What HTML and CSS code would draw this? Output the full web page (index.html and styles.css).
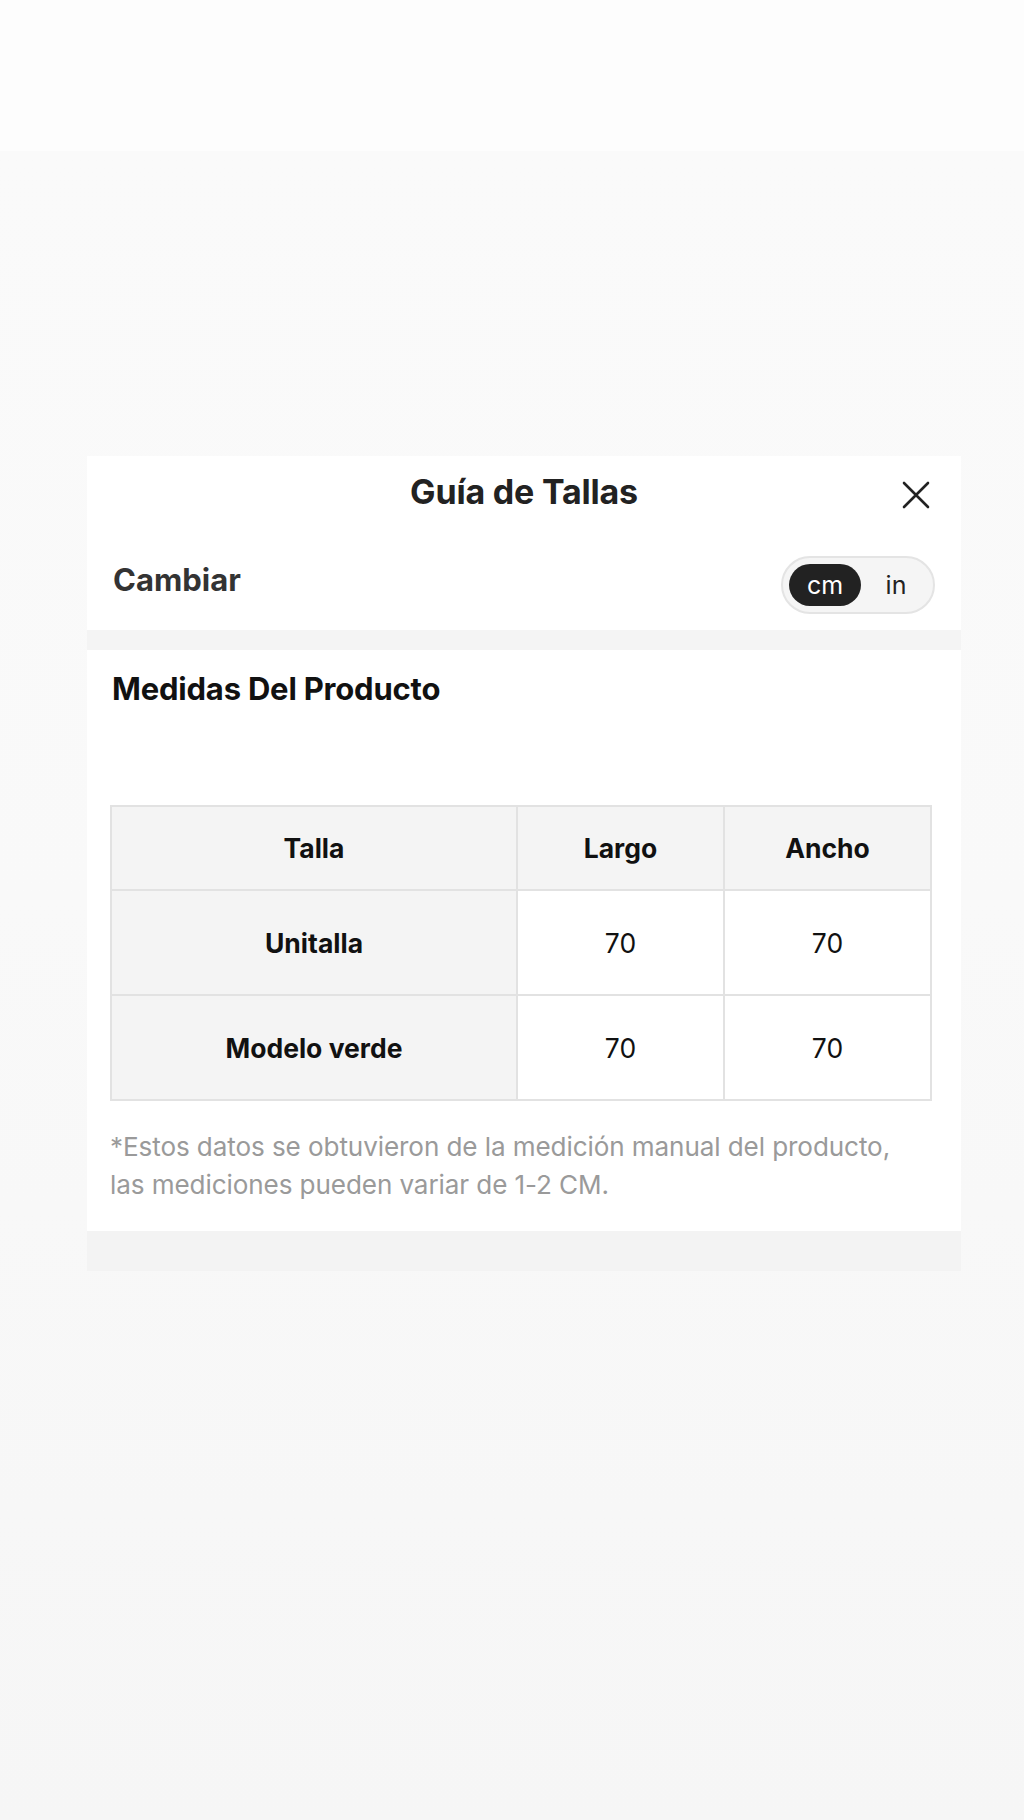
FILE: index.html
```html
<!DOCTYPE html>
<html lang="es">
<head>
<meta charset="utf-8">
<link rel="stylesheet" href="styles.css">
</head>
<body>
<div class="page">
  <div class="topband"></div>
  <div class="modal">
    <div class="head">
      <div class="title-row">
        <h1 class="title">Guía de Tallas</h1>
        <svg class="close" viewBox="0 0 30 30" width="30" height="30"><path d="M3 3 L27 27 M27 3 L3 27" stroke="#222" stroke-width="2.6" stroke-linecap="round" fill="none"/></svg>
      </div>
      <div class="unit-row">
        <span class="unit-label">Cambiar</span>
        <div class="toggle">
          <span class="opt on">cm</span>
          <span class="opt">in</span>
        </div>
      </div>
    </div>
    <div class="sep"></div>
    <div class="body">
      <h2 class="section-title">Medidas Del Producto</h2>
      <table class="sizes">
        <colgroup>
          <col class="w1">
          <col class="w2">
          <col class="w2">
        </colgroup>
        <thead>
          <tr><th class="c1">Talla</th><th>Largo</th><th>Ancho</th></tr>
        </thead>
        <tbody>
          <tr><th class="c1">Unitalla</th><td>70</td><td>70</td></tr>
          <tr><th class="c1">Modelo verde</th><td>70</td><td>70</td></tr>
        </tbody>
      </table>
      <p class="note">*Estos datos se obtuvieron de la medición manual del producto, las mediciones pueden variar de 1-2 CM.</p>
    </div>
    <div class="foot"></div>
  </div>
</div>
</body>
</html>
```

FILE: styles.css
```css
html, body {
  margin: 0;
  padding: 0;
}
body {
  width: 1024px;
  min-height: 1820px;
  background: linear-gradient(#fafafa 151px, #f9f9f9 900px, #f6f6f6 1820px);
  font-family: Inter, "Noto Sans", "Liberation Sans", sans-serif;
  color: #111;
}
.page {
  display: flex;
  flex-direction: column;
}
.topband {
  height: 151px;
  background: #fdfdfd;
}
.modal {
  margin: 305px 0 0 87px;
  width: 874px;
  display: flex;
  flex-direction: column;
}
.head {
  background: #fff;
  height: 174px;
  display: flex;
  flex-direction: column;
  padding: 0 26px;
  box-sizing: border-box;
}
.title-row {
  height: 70px;
  display: flex;
  align-items: center;
  justify-content: center;
  position: relative;
}
.title {
  margin: 0;
  font-size: 34px;
  font-weight: 700;
  color: #222;
  letter-spacing: -0.2px;
}
.close {
  position: absolute;
  right: 4px;
  top: 24px;
}
.unit-row {
  display: flex;
  align-items: center;
  justify-content: space-between;
  margin-top: 30px;
}
.unit-label {
  font-size: 31px;
  font-weight: 700;
  color: #333;
  margin-bottom: 12px;
}
.toggle {
  display: flex;
  align-items: center;
  gap: 4px;
  width: 154px;
  height: 58px;
  box-sizing: border-box;
  border: 2px solid #e4e4e4;
  border-radius: 29px;
  background: #f5f5f5;
  padding: 0 6px;
}
.opt {
  font-size: 25px;
  color: #222;
  width: 62px;
  height: 42px;
  display: flex;
  align-items: center;
  justify-content: center;
  border-radius: 21px;
}
.opt.on {
  width: 72px;
  background: #222;
  color: #fff;
}
.sep {
  height: 20px;
  background: #f4f4f4;
}
.body {
  background: #fff;
  padding: 20px 31px 0 23px;
  height: 581px;
  box-sizing: border-box;
}
.section-title {
  margin: 0 0 0 2px;
  font-size: 31px;
  font-weight: 700;
  color: #111;
  letter-spacing: -0.2px;
}
.sizes {
  margin-top: 98px;
  width: 820px;
  border-collapse: collapse;
  table-layout: fixed;
}
.sizes col.w1 {
  width: 406px;
}
.sizes col.w2 {
  width: 207px;
}
.sizes th, .sizes td {
  border: 2px solid #e2e2e2;
  text-align: center;
  font-size: 26.5px;
}
.sizes thead th {
  height: 80px;
  background: #f4f4f4;
  font-weight: 700;
}
.sizes tbody tr {
  height: 105px;
}
.sizes th.c1 {
  background: #f4f4f4;
  font-weight: 700;
}
.sizes td {
  font-weight: 400;
  background: #fff;
}
.note {
  margin: 27px 0 0 0;
  max-width: 790px;
  font-size: 26.1px;
  line-height: 38px;
  color: #9a9a9a;
  letter-spacing: -0.1px;
}
.foot {
  height: 40px;
  background: #f3f3f3;
}
```
